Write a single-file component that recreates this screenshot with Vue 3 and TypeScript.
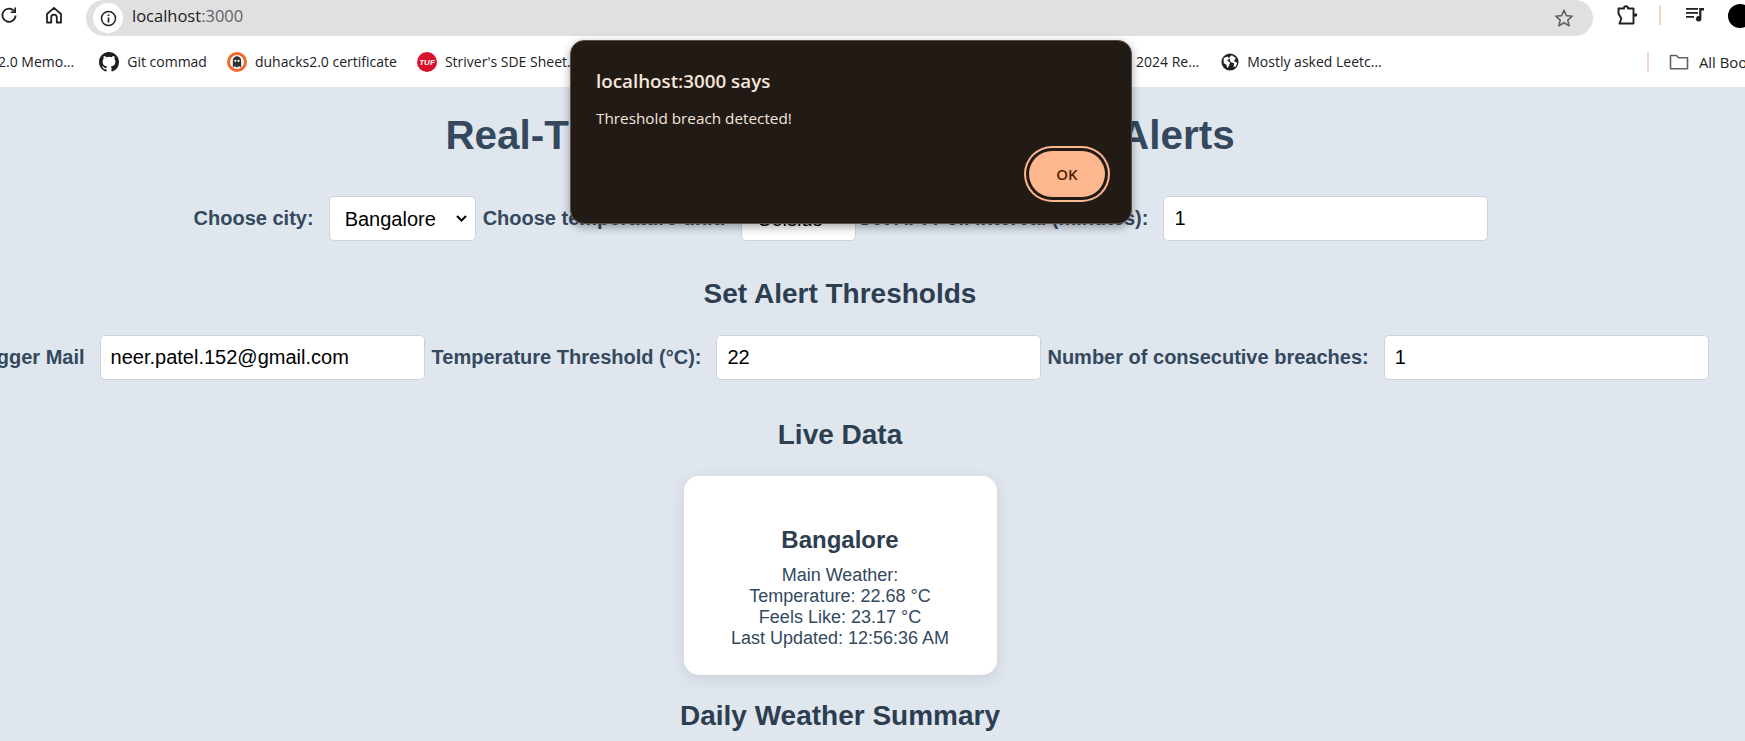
<script setup lang="ts">
const threshold = {
  mail: "neer.patel.152@gmail.com",
  temp: "22",
  breaches: "1",
};

const weather = ["Main Weather:", "Temperature: 22.68 °C", "Feels Like: 23.17 °C", "Last Updated: 12:56:36 AM"];
</script>

<template>
  <div class="window">
    <div class="toolbar">
      <svg class="reload" width="18" height="18" viewBox="0 0 18 18" fill="none" stroke="#202124" stroke-width="1.8">
        <path d="M14.5 5.5A6.6 6.6 0 1 0 15.6 9.5" />
        <path d="M15.2 1.6v4.6h-4.6" stroke-width="1.6" />
      </svg>
      <svg class="home" width="18" height="18" viewBox="0 0 18 18" fill="none" stroke="#202124" stroke-width="1.8" stroke-linejoin="round">
        <path d="M2 8 9 1.800 16 8v8.500h-4.200v-5a2.800 2.800 0 0 0-5.600 0v5H2z" />
      </svg>
      <div class="omnibox">
        <span class="info">
          <svg width="17" height="17" viewBox="0 0 17 17" fill="none" stroke="#202124" stroke-width="1.5">
            <circle cx="8.5" cy="8.5" r="7" />
            <path d="M8.5 7.5v5M8.5 4.4v1.7" stroke-width="1.7" />
          </svg>
        </span>
        <span class="url">localhost<span class="port">:3000</span></span>
        <svg class="star" width="20" height="20" viewBox="0 0 20 20" fill="none" stroke="#5f6368" stroke-width="1.6" stroke-linejoin="round">
          <path d="M10 2.2l2.4 5.4 5.8.6-4.4 3.9 1.3 5.7L10 14.8l-5.1 3 1.3-5.7-4.4-3.9 5.8-.6z" />
        </svg>
      </div>
      <svg class="ext" width="22" height="22" viewBox="0 0 22 22" fill="none" stroke="#202124" stroke-width="1.9" stroke-linejoin="round">
        <path d="M2.500 4.500h5.500c0-3 4-3 4 0h5.500v15H3.500l1.800-5L2.500 9.500z" />
        <circle cx="19.500" cy="11" r="1.800" fill="#202124" stroke="none" />
      </svg>
      <span class="sep"></span>
      <svg class="media" width="20" height="18" viewBox="0 0 20 18" fill="#202124">
        <path d="M1 2h12v1.8H1zM1 6h12v1.8H1zM1 10h8v1.8H1z" />
        <path d="M14.2 2H19v2.4h-2.6v8.4a2.7 2.7 0 1 1-2.2-2.6z" />
      </svg>
      <span class="avatar"></span>
    </div>

    <div class="bookmarks">
      <span class="bm first">2.0 Memo...</span>
      <span class="bm">
        <svg width="20" height="20" viewBox="0 0 16 16" fill="#1b1f23">
          <path d="M8 0C3.58 0 0 3.58 0 8c0 3.54 2.29 6.53 5.47 7.59.4.07.55-.17.55-.38 0-.19-.01-.82-.01-1.49-2.01.37-2.53-.49-2.69-.94-.09-.23-.48-.94-.82-1.13-.28-.15-.68-.52-.01-.53.63-.01 1.08.58 1.23.82.72 1.21 1.87.87 2.33.66.07-.52.28-.87.51-1.07-1.78-.2-3.64-.89-3.64-3.95 0-.87.31-1.59.82-2.15-.08-.2-.36-1.02.08-2.12 0 0 .67-.21 2.2.82a7.5 7.5 0 0 1 4 0c1.53-1.04 2.2-.82 2.2-.82.44 1.1.16 1.92.08 2.12.51.56.82 1.27.82 2.15 0 3.07-1.87 3.75-3.65 3.95.29.25.54.73.54 1.48 0 1.07-.01 1.93-.01 2.2 0 .21.15.46.55.38A8 8 0 0 0 16 8c0-4.42-3.58-8-8-8z" />
        </svg>
        Git commad
      </span>
      <span class="bm">
        <svg width="20" height="20" viewBox="0 0 20 20">
          <circle cx="10" cy="10" r="8.500" fill="#fff" stroke="#f0692a" stroke-width="3" />
          <path d="M5.800 15.500V8.500a4.200 4.200 0 0 1 8.400 0v7l-2.100-1.300-2.100 1.300-2.100-1.300z" fill="#333" />
          <circle cx="8.400" cy="8.800" r="1.100" fill="#fff" />
          <circle cx="11.600" cy="8.800" r="1.100" fill="#fff" />
        </svg>
        duhacks2.0 certificate
      </span>
      <span class="bm">
        <svg width="20" height="20" viewBox="0 0 20 20">
          <circle cx="10" cy="10" r="10" fill="#d9122e" />
          <text x="10" y="12.600" text-anchor="middle" fill="#fff" font-family="Liberation Sans, sans-serif" font-size="8" font-weight="700" font-style="italic">TUF</text>
        </svg>
        Striver's SDE Sheet...
      </span>
      <span class="bm hidden-item">2024 Re...</span>
      <span class="bm">
        <svg width="18" height="18" viewBox="0 0 20 20">
          <circle cx="10" cy="10" r="9.500" fill="#202124" />
          <path d="M3 5.500 7.500 4 9 6 7 8.500l3 2-1 3.500-2 3-1-4-3-2zM12 2.500l4.500 3-2 3.500 3.500 2-1.500 4-2.500.5.5-4-4-1.500L9 5z" fill="#fff" />
        </svg>
        Mostly asked Leetc...
      </span>
      <span class="bm-sep"></span>
      <span class="bm all">
        <svg width="20" height="20" viewBox="0 0 20 20" fill="none" stroke="#5f6368" stroke-width="1.6" stroke-linejoin="round">
          <path d="M1.500 3.500h6l2 2.200h9v11h-17z" />
        </svg>
        All Bookmarks
      </span>
    </div>

    <main class="page">
      <h1>Real-Time Weather Monitoring and Alerts</h1>

      <div class="row row-config">
        <label>Choose city:</label>
        <select class="city">
          <option>Bangalore</option>
        </select>
        <label>Choose temperature unit:</label>
        <select class="unit">
          <option>Celsius</option>
        </select>
        <label>Set API Poll Interval (minutes):</label>
        <input type="text" value="1" />
      </div>

      <h2>Set Alert Thresholds</h2>

      <div class="row row-alert">
        <label>Trigger Mail</label>
        <input class="mail" type="text" :value="threshold.mail" />
        <label>Temperature Threshold (°C):</label>
        <input type="text" :value="threshold.temp" />
        <label>Number of consecutive breaches:</label>
        <input type="text" :value="threshold.breaches" />
      </div>

      <h2 class="live">Live Data</h2>

      <div class="card">
        <h3>Bangalore</h3>
        <p v-for="line in weather" :key="line">{{ line }}</p>
      </div>

      <h2 class="daily">Daily Weather Summary</h2>
    </main>

    <div class="dialog">
      <div class="dialog-title">localhost:3000 says</div>
      <div class="dialog-msg">Threshold breach detected!</div>
      <button class="ok">OK</button>
    </div>
  </div>
</template>

<style>
html,
body {
  margin: 0;
  overflow: hidden;
}
</style>

<style scoped>
.window {
  position: relative;
  width: 1745px;
  height: 741px;
  overflow: hidden;
  background: #dfe6ee;
  font-family: "Liberation Sans", Arial, sans-serif;
}

.toolbar {
  display: flex;
  align-items: flex-start;
  height: 36px;
  background: #fff;
}
.reload {
  margin: 6px 0 0 0;
  flex: none;
}
.home {
  margin: 6px 0 0 27px;
  flex: none;
}
.omnibox {
  display: flex;
  align-items: center;
  width: 1507px;
  height: 36px;
  margin-left: 23px;
  padding-left: 7px;
  box-sizing: border-box;
  background: #e0e0e0;
  border-radius: 18px;
  flex: none;
}
.info {
  display: flex;
  align-items: center;
  justify-content: center;
  width: 30px;
  height: 30px;
  border-radius: 50%;
  background: #fff;
}
.url {
  margin-left: 9px;
  margin-top: -5px;
  font-family: "Open Sans", "Noto Sans", sans-serif;
  font-size: 16.500px;
  color: #202124;
}
.port {
  color: #5f6368;
}
.star {
  margin-left: auto;
  margin-right: 19px;
}
.ext {
  margin: 4px 0 0 23px;
  flex: none;
}
.sep {
  width: 2px;
  height: 20px;
  margin: 5px 0 0 21px;
  background: #f7d5c4;
  flex: none;
}
.media {
  margin: 6px 0 0 24px;
  flex: none;
}
.avatar {
  width: 24px;
  height: 24px;
  margin: 4px 0 0 23px;
  border-radius: 50%;
  background: #000;
  flex: none;
}

.bookmarks {
  display: flex;
  align-items: center;
  height: 51px;
  background: #fff;
  font-family: "Open Sans", "Noto Sans", sans-serif;
  font-size: 14px;
  color: #202124;
  white-space: nowrap;
}
.bm {
  display: flex;
  align-items: center;
  gap: 8px;
  margin-left: 20px;
}
.bm svg {
  flex: none;
}
.bm.first {
  margin-left: -2px;
}
.bm.first + .bm {
  margin-left: 25px;
}
.bm.hidden-item {
  margin-left: 558px;
}
.bm.hidden-item + .bm {
  margin-left: 22px;
}
.bm-sep {
  width: 2px;
  height: 20px;
  margin-left: auto;
  background: #f7d5c4;
}
.bm.all {
  gap: 10px;
  width: 122px;
  margin-left: 20px;
  margin-right: -46px;
  font-size: 14.800px;
}

.page {
  width: 1680px;
  color: #34495e;
}
h1 {
  margin: 0;
  padding-top: 25px;
  font-size: 40.400px;
  line-height: 46px;
  font-weight: 700;
  text-align: center;
  color: #34495e;
}
h2 {
  margin: 37px 0 0;
  font-size: 28px;
  line-height: 32px;
  font-weight: 700;
  text-align: center;
  color: #2c3e50;
}
h2.live {
  margin-top: 39px;
}
h2.daily {
  margin-top: 25px;
}
.row {
  display: flex;
  justify-content: center;
  align-items: center;
  margin-top: 38px;
  white-space: nowrap;
}
.row-config {
  padding-left: 2px;
}
.row-alert {
  margin-top: 25px;
  padding-left: 1px;
}
label {
  margin-right: 15px;
  font-size: 20px;
  font-weight: 700;
  color: #34495e;
  flex: none;
}
input,
select {
  box-sizing: border-box;
  height: 45px;
  margin-right: 6px;
  padding: 0 10px;
  font-family: "Liberation Sans", Arial, sans-serif;
  font-size: 20px;
  color: #000;
  background: #fff;
  border: 1px solid #ccd3df;
  border-radius: 5px;
  flex: none;
}
input {
  width: 325px;
}
.row > :last-child {
  margin-right: 0;
}
input.mail {
  margin-right: 7px;
}
select {
  appearance: none;
  background-image: url("data:image/svg+xml,%3Csvg xmlns='http://www.w3.org/2000/svg' width='11' height='7' viewBox='0 0 11 7'%3E%3Cpath d='M1 1l4.500 4.500L10 1' fill='none' stroke='%23000' stroke-width='2'/%3E%3C/svg%3E");
  background-repeat: no-repeat;
  background-position: right 8px center;
}
.city {
  width: 147px;
  margin-right: 7px;
  padding-left: 15px;
}
.unit {
  width: 115px;
  margin-right: 2px;
  padding-left: 15px;
}

.card {
  box-sizing: border-box;
  width: 313px;
  height: 199px;
  margin: 25px auto 0;
  padding-top: 50px;
  text-align: center;
  background: #fff;
  border-radius: 15px;
  box-shadow: 0 4px 15px rgba(0, 0, 0, 0.1);
}
.card h3 {
  margin: 0 0 11px;
  font-size: 24px;
  line-height: 28px;
  font-weight: 700;
  color: #2c3e50;
}
.card p {
  margin: 0;
  font-size: 18px;
  line-height: 21px;
  color: #34495e;
}

.dialog {
  position: absolute;
  left: 570px;
  top: 40px;
  box-sizing: border-box;
  width: 562px;
  height: 184px;
  padding: 28px 25px 0;
  font-family: "Open Sans", "Noto Sans", sans-serif;
  color: #f5e6dc;
  background: #221a15;
  border: 1px solid #5c5148;
  border-radius: 14px;
  box-shadow: 0 3px 10px rgba(0, 0, 0, 0.35);
}
.dialog-title {
  font-size: 18.800px;
  line-height: 24px;
  font-weight: 600;
}
.dialog-msg {
  margin-top: 15px;
  font-size: 15.300px;
  line-height: 20px;
}
.ok {
  position: absolute;
  right: 26px;
  bottom: 26px;
  width: 76px;
  height: 46px;
  padding: 0;
  font-family: "Open Sans", "Noto Sans", sans-serif;
  font-size: 15px;
  font-weight: 600;
  color: #4f2200;
  background: #feb78f;
  border: none;
  border-radius: 23px;
  box-shadow: 0 0 0 3px #221a15, 0 0 0 5px #feb78f;
}
</style>
